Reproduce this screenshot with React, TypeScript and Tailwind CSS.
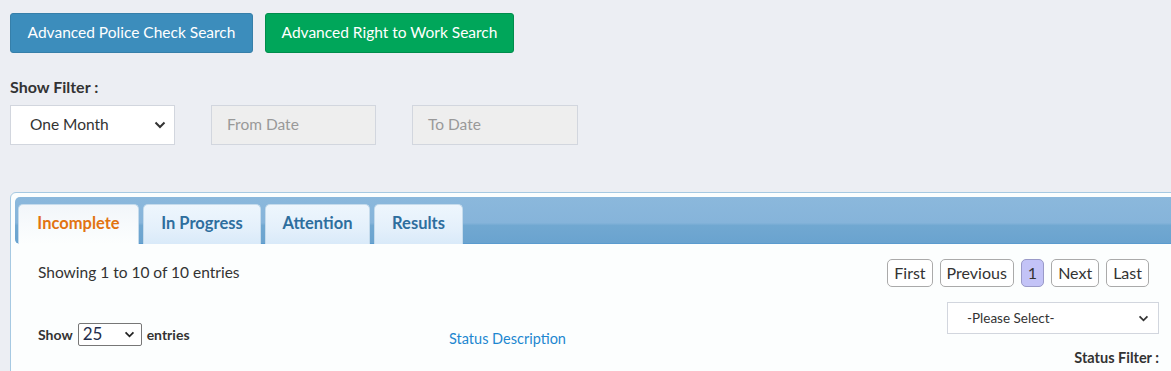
import React from 'react';

const Chevron = ({ className = '' }: { className?: string }) => (
  <svg viewBox="0 0 12 8" className={className} fill="none" stroke="currentColor" strokeWidth="2">
    <path d="M1.5 1.5L6 6l4.5-4.5" />
  </svg>
);

const tabs = [
  { label: 'Incomplete', w: 'w-[121px]', active: true },
  { label: 'In Progress', w: 'w-[118px]', active: false },
  { label: 'Attention', w: 'w-[105px]', active: false },
  { label: 'Results', w: 'w-[89px]', active: false },
];

const pages = ['First', 'Previous', '1', 'Next', 'Last'];

const App: React.FC = () => {
  return (
    <div className="w-[1171px] h-[371px] overflow-hidden bg-[#eceef3] text-[#333] font-['Lato','Open_Sans',sans-serif]">
      <div className="flex gap-[12px] pl-[10px] pt-[13px]">
        <button className="w-[243px] h-[40px] rounded-[3px] bg-[#3c8dbc] border border-[#367fa9] text-white text-[15.5px]">
          Advanced Police Check Search
        </button>
        <button className="w-[249px] h-[40px] rounded-[3px] bg-[#00a65a] border border-[#008d4c] text-white text-[15.5px]">
          Advanced Right to Work Search
        </button>
      </div>

      <div className="pl-[10px] mt-[25px] text-[16px] font-bold leading-[18px]">Show Filter :</div>

      <div className="flex gap-[36px] pl-[10px] mt-[9px]">
        <div className="w-[165px] h-[40px] bg-white border border-[#d2d6de] flex items-center justify-between pl-[19px] pr-[8px] text-[15.5px]">
          <span>One Month</span>
          <Chevron className="w-[12px] h-[8px] text-[#333]" />
        </div>
        <div className="w-[165px] h-[40px] bg-[#eeeeee] border border-[#d2d6de] flex items-center pl-[15px] text-[15.5px] text-[#999]">
          From Date
        </div>
        <div className="w-[166px] h-[40px] bg-[#eeeeee] border border-[#d2d6de] flex items-center pl-[15px] text-[15.5px] text-[#999]">
          To Date
        </div>
      </div>

      <div className="ml-[10px] mt-[47px] w-[1180px] h-[200px] bg-[#fcfefe] border border-[#a6c9e2] rounded-tl-[6px] p-[4px]">
        <div className="h-[47px] rounded-l-[5px] rounded-tr-[5px] border-b border-[#5a9bcf] bg-[linear-gradient(to_bottom,#8bb8dc_0%,#86b4da_56%,#71a8d1_62%,#6aa3cf_100%)] flex items-end gap-[4px] pl-[3px]">
          {tabs.map((t) => (
            <div
              key={t.label}
              className={`${t.w} h-[40px] -mb-px pb-[3px] rounded-t-[5px] border border-b-0 flex items-center justify-center text-[16.5px] font-bold ${
                t.active
                  ? 'bg-[linear-gradient(to_bottom,#f2f6fa,#fcfefe)] border-[#c5dbec] text-[#e27311]'
                  : 'bg-[linear-gradient(to_bottom,#eef6fd_0%,#e4f0fb_60%,#d9eaf9_100%)] border-[#c5dbec] text-[#2e6e9e]'
              }`}
            >
              {t.label}
            </div>
          ))}
        </div>

        <div className="w-[1144px] pl-[23px]">
          <div className="flex items-center justify-between mt-[15px]">
            <span className="text-[15.5px]">Showing 1 to 10 of 10 entries</span>
            <div className="flex gap-[7px] mr-[10px]">
              {pages.map((p) => (
                <div
                  key={p}
                  className={`h-[28px] px-[6px] rounded-[5px] border flex items-center text-[16px] ${
                    p === '1' ? 'bg-[#c3c3f7] border-[#9a9ac8] text-[#333]' : 'bg-white border-[#aaa]'
                  }`}
                >
                  {p}
                </div>
              ))}
            </div>
          </div>

          <div className="flex mt-[15px]">
            <div className="w-[154px] flex items-center gap-[5px] mt-[20px] h-[24px] text-[14px] font-bold self-start">
              <span>Show</span>
              <div className="w-[64px] h-[23px] border border-[#777] rounded-[2px] bg-white flex items-center justify-between pl-[4px] pr-[6px] font-normal text-[17px] text-[#1f2d4d]">
                <span>25</span>
                <Chevron className="w-[11px] h-[7px] text-[#222]" />
              </div>
              <span>entries</span>
            </div>
            <div className="mt-[26px] ml-[257px] text-[14.5px] text-[#1d87d0] self-start">Status Description</div>
            <div className="flex flex-col items-end ml-auto">
              <div className="w-[212px] h-[32px] bg-white border border-[#d2d6de] flex items-center justify-between pl-[19px] pr-[9px] text-[13.5px]">
                <span>-Please Select-</span>
                <Chevron className="w-[11px] h-[7px] text-[#333]" />
              </div>
              <div className="mt-[13px] text-[14.5px] font-bold">Status Filter :</div>
            </div>
          </div>
        </div>
      </div>
    </div>
  );
};

export default App;
